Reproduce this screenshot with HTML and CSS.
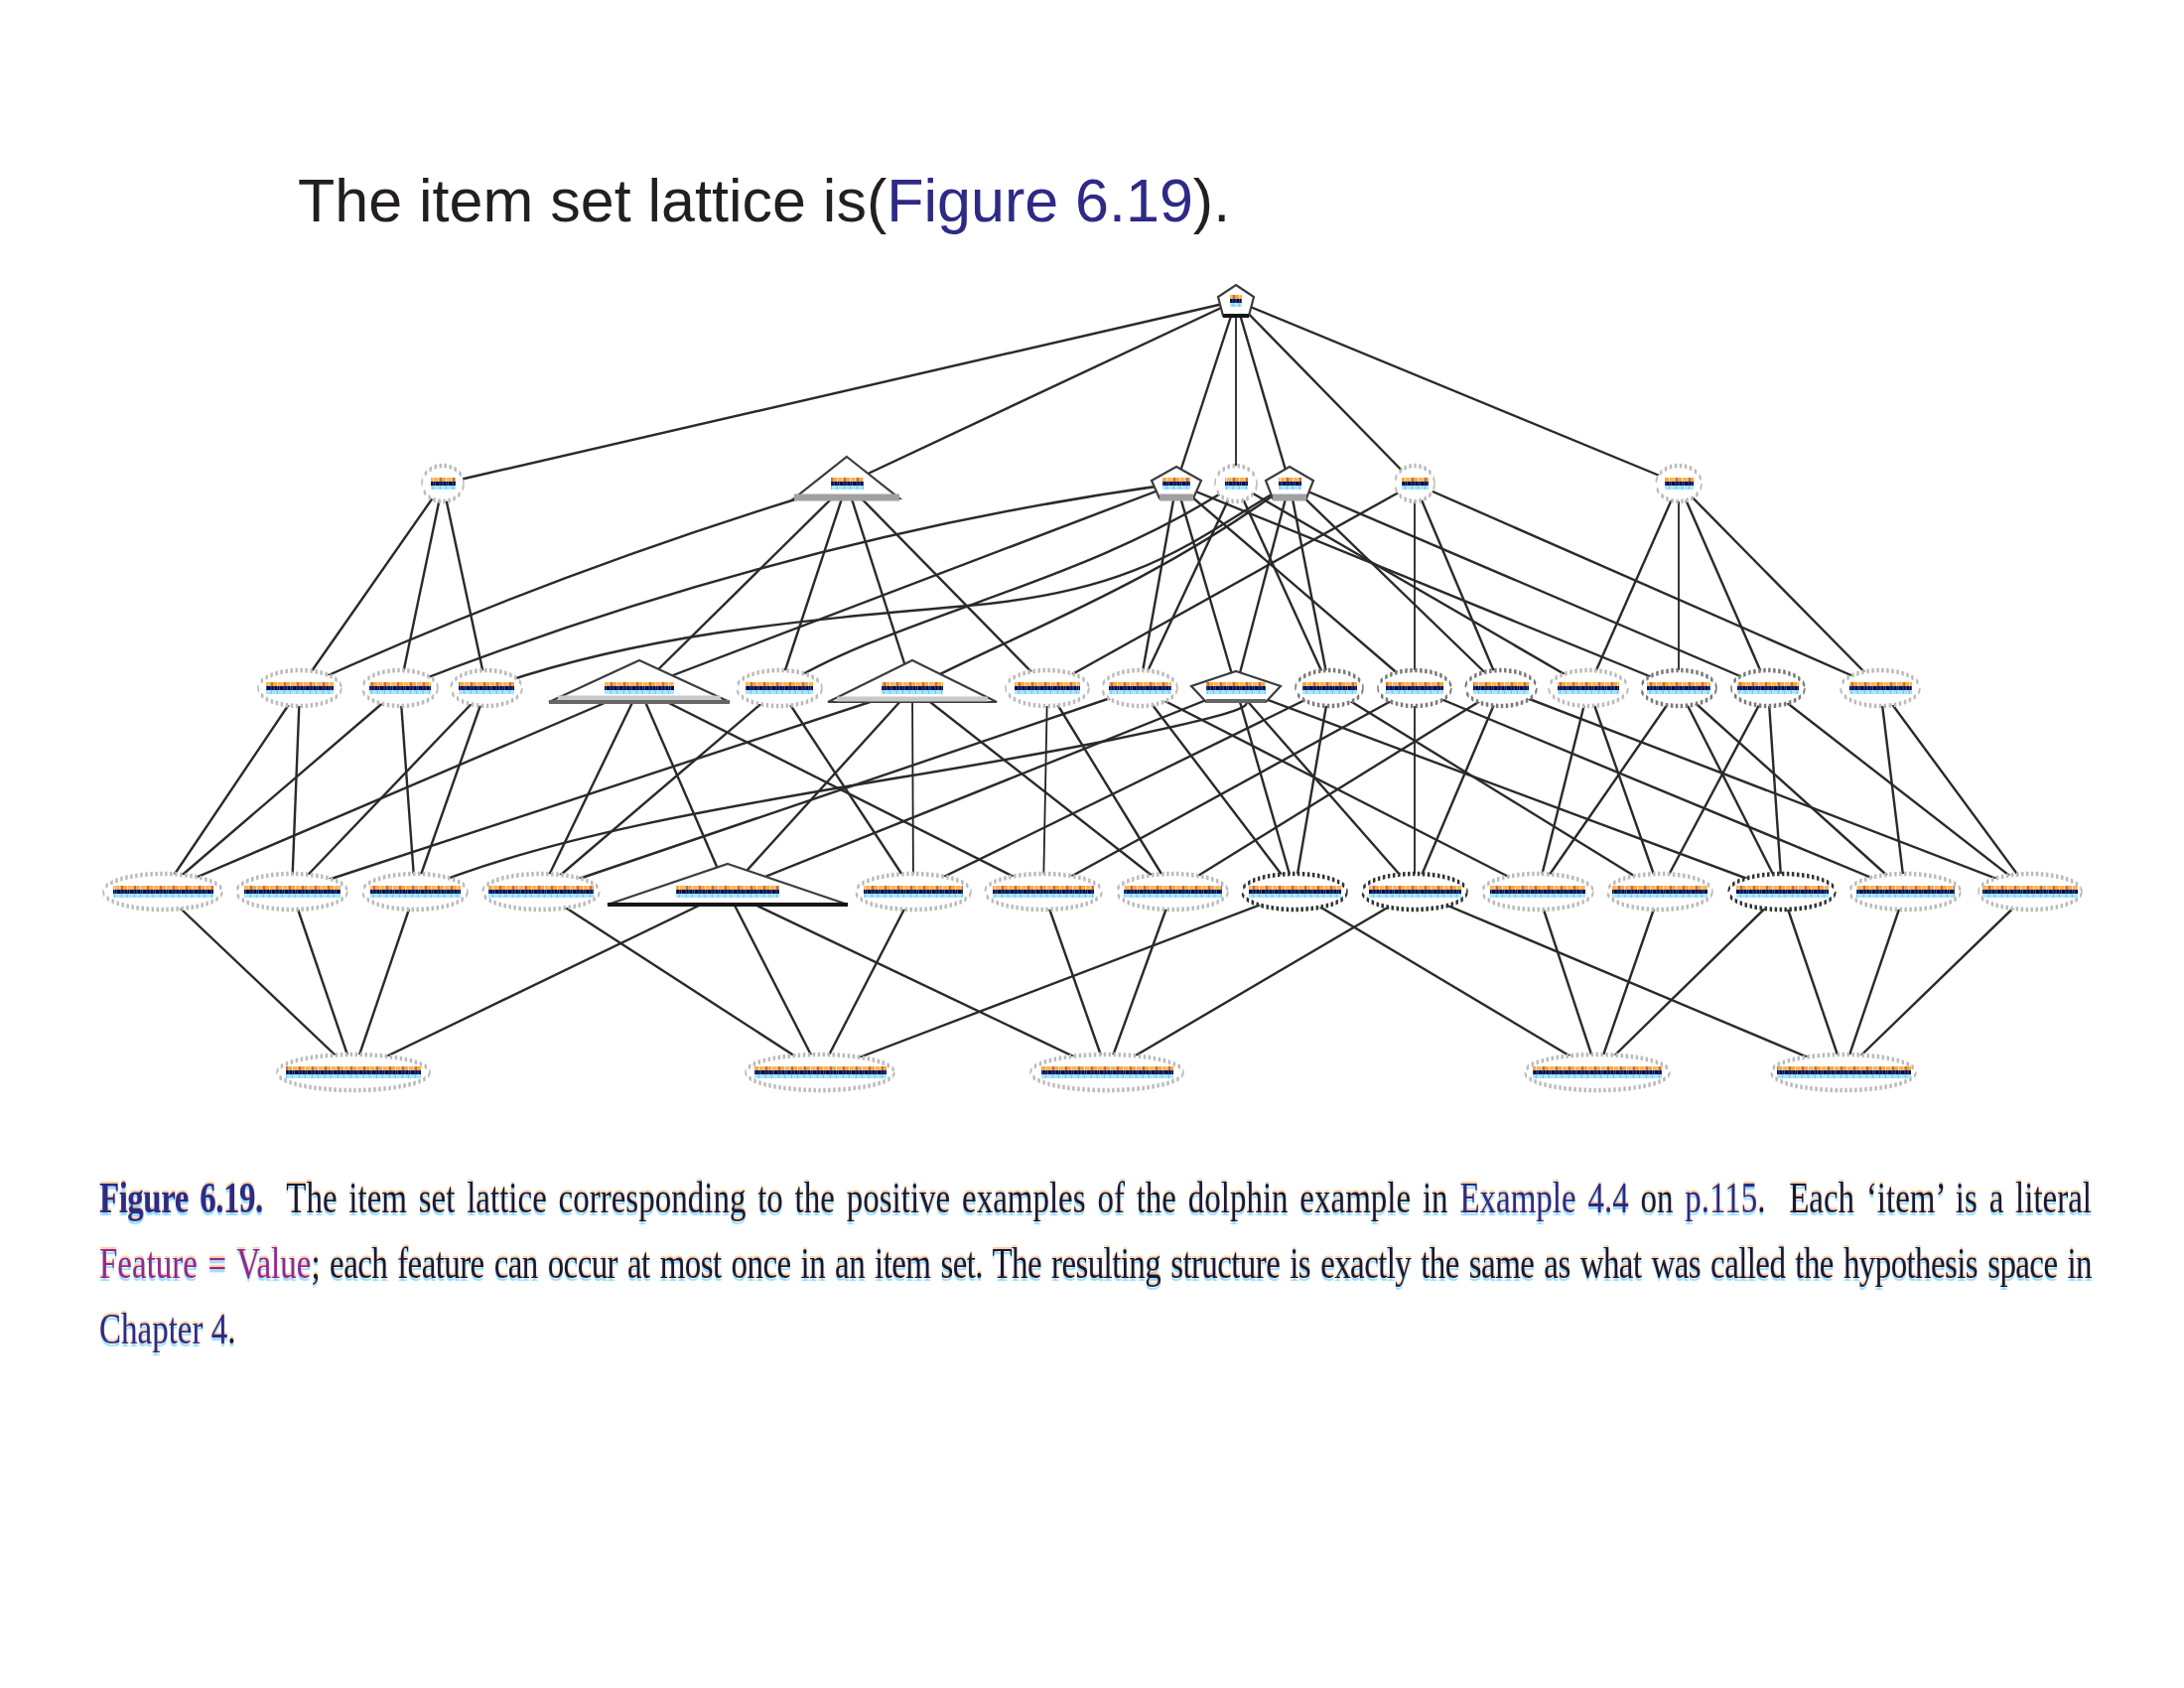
FILE: index.html
```html
<!DOCTYPE html>
<html lang="en">
<head>
<meta charset="utf-8">
<title>Item set lattice</title>
<link rel="stylesheet" href="styles.css">
</head>
<body>
<main class="slide">
<h1 class="title">The item set lattice is(<span class="ref">Figure 6.19</span>).</h1>
<svg class="lattice" width="2200" height="850" viewBox="0 270 2200 850" aria-label="Item set lattice">
<defs>
<pattern id="bar" patternUnits="userSpaceOnUse" x="0" y="-6" width="13" height="12">
<rect x="0" y="0" width="13" height="12" fill="#fff"/>
<rect x="0" y="0" width="13" height="4" fill="#fde3bf"/>
<rect x="0" y="0" width="3" height="4" fill="#f9a83c"/>
<rect x="4" y="0" width="4.5" height="4" fill="#fbb453"/>
<rect x="9.5" y="0" width="3" height="4" fill="#c9702a"/>
<rect x="0" y="4" width="13" height="4" fill="#3f86cc"/>
<rect x="0.4" y="4" width="2.6" height="4" fill="#0c0848"/>
<rect x="3.5" y="4" width="1.8" height="4" fill="#0c0848"/>
<rect x="5.9" y="4" width="3.8" height="4" fill="#0c0848"/>
<rect x="10.3" y="4" width="2.4" height="4" fill="#0c0848"/>
<rect x="0" y="8" width="13" height="4" fill="#a9e6fb"/>
<rect x="2.8" y="8" width="1" height="4" fill="#6cc0ee"/>
<rect x="9.8" y="8" width="1" height="4" fill="#6cc0ee"/>
</pattern>
</defs>
<g class="edges">
<!-- root -->
<path d="M1245 303L446 487"/><path d="M1245 303L853 487"/><path d="M1245 303L1185 487"/><path class="v" d="M1245 303L1245 487"/><path d="M1245 303L1299 487"/><path d="M1245 303L1425 487"/><path d="M1245 303L1691 487"/>
<!-- level 1 to level 2 -->
<path d="M446 487L302 693"/><path d="M446 487L403 693"/><path d="M446 487L490 693"/>
<path d="M853 487Q560 575 302 693"/><path d="M853 487L644 693"/><path d="M853 487L785 693"/><path d="M853 487L919 693"/><path d="M853 487L1055 693"/>
<path d="M1185 487Q794 540 403 693"/><path d="M1185 487L644 693"/><path d="M1185 487L1148 693"/><path d="M1185 487L1245 693"/><path d="M1185 487L1425 693"/><path d="M1185 487L1691 693"/>
<path d="M1245 487C1090 590 900 620 785 693"/><path d="M1245 487L1148 693"/><path d="M1245 487L1339 693"/><path d="M1245 487L1600 693"/>
<path d="M490 693C640 640 800 625 975 610S1200 545 1299 487"/><path d="M1299 487C1160 590 1020 640 919 693"/><path d="M1299 487L1245 693"/><path d="M1299 487L1339 693"/><path d="M1299 487L1512 693"/><path d="M1299 487L1781 693"/>
<path d="M1425 487L1055 693"/><path class="v" d="M1425 487L1425 693"/><path d="M1425 487L1512 693"/><path d="M1425 487L1894 693"/>
<path d="M1691 487L1600 693"/><path class="v" d="M1691 487L1691 693"/><path d="M1691 487L1781 693"/><path d="M1691 487L1894 693"/>
<!-- level 2 to level 3 -->
<path d="M302 693L164 898"/><path d="M302 693L294 898"/>
<path d="M403 693L164 898"/><path d="M403 693L418 898"/>
<path d="M490 693L294 898"/><path d="M490 693L418 898"/>
<path d="M644 693L164 898"/><path d="M644 693L545 898"/><path d="M644 693L733 898"/><path d="M644 693L1051 898"/>
<path d="M785 693L545 898"/><path d="M785 693L920 898"/>
<path d="M919 693L294 898"/><path d="M919 693L733 898"/><path class="v" d="M919 693L920 898"/><path d="M919 693L1181 898"/>
<path class="v" d="M1055 693L1051 898"/><path d="M1055 693L1181 898"/>
<path d="M1148 693Q860 790 545 898"/><path d="M1148 693L1304 898"/><path d="M1148 693L1549 898"/>
<path d="M418 898C600 820 900 790 1120 745S1220 710 1245 693"/><path d="M1245 693L733 898"/><path d="M1245 693L1304 898"/><path d="M1245 693L1425 898"/><path d="M1245 693L1795 898"/>
<path d="M1339 693L920 898"/><path d="M1339 693L1304 898"/><path d="M1339 693L1672 898"/>
<path d="M1425 693L1051 898"/><path class="v" d="M1425 693L1425 898"/><path d="M1425 693L1919 898"/>
<path d="M1512 693L1181 898"/><path d="M1512 693L1425 898"/><path d="M1512 693L2045 898"/>
<path d="M1600 693L1549 898"/><path d="M1600 693L1672 898"/>
<path d="M1691 693L1549 898"/><path d="M1691 693L1795 898"/><path d="M1691 693L1919 898"/>
<path d="M1781 693L1672 898"/><path d="M1781 693L1795 898"/><path d="M1781 693L2045 898"/>
<path d="M1894 693L1919 898"/><path d="M1894 693L2045 898"/>
<!-- level 3 to level 4 -->
<path d="M164 898L356 1080"/><path d="M294 898L356 1080"/><path d="M418 898L356 1080"/><path d="M733 898L356 1080"/>
<path d="M545 898L826 1080"/><path d="M733 898L826 1080"/><path d="M920 898L826 1080"/><path d="M1304 898L826 1080"/>
<path d="M733 898L1115 1080"/><path d="M1051 898L1115 1080"/><path d="M1181 898L1115 1080"/><path d="M1425 898L1115 1080"/>
<path d="M1304 898L1609 1080"/><path d="M1549 898L1609 1080"/><path d="M1672 898L1609 1080"/><path d="M1795 898L1609 1080"/>
<path d="M1425 898L1857 1080"/><path d="M1795 898L1857 1080"/><path d="M1919 898L1857 1080"/><path d="M2045 898L1857 1080"/>
</g>
<!-- root node -->
<g transform="translate(1245 303)"><polygon class="pent" points="0,-16 18,-4 13,15 -13,15 -18,-4"/><path class="base-black" d="M-13 15H13"/><rect x="-6" y="-6" width="12" height="12" fill="url(#bar)"/></g>
<!-- level 1 -->
<g transform="translate(446 487)"><ellipse class="ring" rx="21" ry="6"/><rect x="-12" y="-6" width="25" height="12" fill="url(#bar)"/></g>
<g transform="translate(853 487)"><polygon class="tri" points="0,-27 53,15 -53,15"/><path class="base-mid" d="M-53 14H53"/><rect x="-16" y="-6" width="33" height="12" fill="url(#bar)"/></g>
<g transform="translate(1185 487)"><polygon class="pent" points="0,-17 25,-3 17,15 -17,15 -25,-3"/><path class="base-mid" d="M-17 14H17"/><rect x="-14" y="-6" width="28" height="12" fill="url(#bar)"/></g>
<g transform="translate(1245 487)"><ellipse class="ring" rx="21" ry="6"/><rect x="-11" y="-6" width="23" height="12" fill="url(#bar)"/></g>
<g transform="translate(1299 487)"><polygon class="pent" points="0,-17 24,-3 17,15 -17,15 -24,-3"/><path class="base-mid" d="M-17 14H17"/><rect x="-11" y="-6" width="23" height="12" fill="url(#bar)"/></g>
<g transform="translate(1425 487)"><ellipse class="ring" rx="20" ry="6"/><rect x="-13" y="-6" width="27" height="12" fill="url(#bar)"/></g>
<g transform="translate(1691 487)"><ellipse class="ring" rx="23" ry="6"/><rect x="-14" y="-6" width="29" height="12" fill="url(#bar)"/></g>
<!-- level 2 -->
<g transform="translate(302 693)"><ellipse class="ring" rx="42" ry="6"/><rect x="-34" y="-6" width="68" height="12" fill="url(#bar)"/></g>
<g transform="translate(403 693)"><ellipse class="ring" rx="38" ry="6"/><rect x="-31" y="-6" width="62" height="12" fill="url(#bar)"/></g>
<g transform="translate(490 693)"><ellipse class="ring" rx="36" ry="6"/><rect x="-28" y="-6" width="56" height="12" fill="url(#bar)"/></g>
<g transform="translate(644 693)"><polygon class="tri" points="0,-28 91,14 -91,14"/><path class="base-light" d="M-82 10H82"/><path class="base-dark" d="M-91 14H91"/><rect x="-35" y="-6" width="70" height="12" fill="url(#bar)"/></g>
<g transform="translate(785 693)"><ellipse class="ring" rx="43" ry="6"/><rect x="-34" y="-6" width="68" height="12" fill="url(#bar)"/></g>
<g transform="translate(919 693)"><polygon class="tri" points="0,-28 85,14 -85,14"/><path class="base-light" d="M-76 11H76"/><rect x="-31" y="-6" width="62" height="12" fill="url(#bar)"/></g>
<g transform="translate(1055 693)"><ellipse class="ring" rx="42" ry="6"/><rect x="-33" y="-6" width="66" height="12" fill="url(#bar)"/></g>
<g transform="translate(1148 693)"><ellipse class="ring" rx="38" ry="6"/><rect x="-31" y="-6" width="63" height="12" fill="url(#bar)"/></g>
<g transform="translate(1245 693)"><polygon class="pent" points="0,-17 45,-2 30,14 -30,14 -45,-2"/><path class="base-dark" d="M-30 13H30"/><rect x="-30" y="-6" width="60" height="12" fill="url(#bar)"/></g>
<g transform="translate(1339 693)"><ellipse class="ring dark" rx="34" ry="6"/><rect x="-27" y="-6" width="55" height="12" fill="url(#bar)"/></g>
<g transform="translate(1425 693)"><ellipse class="ring dark" rx="37" ry="6"/><rect x="-29" y="-6" width="58" height="12" fill="url(#bar)"/></g>
<g transform="translate(1512 693)"><ellipse class="ring dark" rx="36" ry="6"/><rect x="-28" y="-6" width="56" height="12" fill="url(#bar)"/></g>
<g transform="translate(1600 693)"><ellipse class="ring" rx="40" ry="6"/><rect x="-31" y="-6" width="62" height="12" fill="url(#bar)"/></g>
<g transform="translate(1691 693)"><ellipse class="ring dark" rx="38" ry="6"/><rect x="-32" y="-6" width="64" height="12" fill="url(#bar)"/></g>
<g transform="translate(1781 693)"><ellipse class="ring dark" rx="37" ry="6"/><rect x="-31" y="-6" width="62" height="12" fill="url(#bar)"/></g>
<g transform="translate(1894 693)"><ellipse class="ring" rx="40" ry="6"/><rect x="-31" y="-6" width="63" height="12" fill="url(#bar)"/></g>
<!-- level 3 -->
<g transform="translate(164 898)"><ellipse class="ring" rx="60" ry="6"/><rect x="-50" y="-6" width="101" height="12" fill="url(#bar)"/></g>
<g transform="translate(294 898)"><ellipse class="ring" rx="56" ry="6"/><rect x="-48" y="-6" width="97" height="12" fill="url(#bar)"/></g>
<g transform="translate(418 898)"><ellipse class="ring" rx="53" ry="6"/><rect x="-45" y="-6" width="91" height="12" fill="url(#bar)"/></g>
<g transform="translate(545 898)"><ellipse class="ring" rx="59" ry="6"/><rect x="-53" y="-6" width="106" height="12" fill="url(#bar)"/></g>
<g transform="translate(733 898)"><polygon class="tri" points="0,-28 121,13 -121,13"/><path class="base-black" d="M-121 13H121"/><rect x="-52" y="-6" width="104" height="12" fill="url(#bar)"/></g>
<g transform="translate(920 898)"><ellipse class="ring" rx="58" ry="6"/><rect x="-50" y="-6" width="100" height="12" fill="url(#bar)"/></g>
<g transform="translate(1051 898)"><ellipse class="ring" rx="59" ry="6"/><rect x="-51" y="-6" width="102" height="12" fill="url(#bar)"/></g>
<g transform="translate(1181 898)"><ellipse class="ring" rx="56" ry="6"/><rect x="-49" y="-6" width="99" height="12" fill="url(#bar)"/></g>
<g transform="translate(1304 898)"><ellipse class="ring black" rx="53" ry="6"/><rect x="-46" y="-6" width="93" height="12" fill="url(#bar)"/></g>
<g transform="translate(1425 898)"><ellipse class="ring black" rx="53" ry="6"/><rect x="-46" y="-6" width="93" height="12" fill="url(#bar)"/></g>
<g transform="translate(1549 898)"><ellipse class="ring" rx="56" ry="6"/><rect x="-48" y="-6" width="96" height="12" fill="url(#bar)"/></g>
<g transform="translate(1672 898)"><ellipse class="ring" rx="53" ry="6"/><rect x="-48" y="-6" width="96" height="12" fill="url(#bar)"/></g>
<g transform="translate(1795 898)"><ellipse class="ring black" rx="54" ry="6"/><rect x="-46" y="-6" width="93" height="12" fill="url(#bar)"/></g>
<g transform="translate(1919 898)"><ellipse class="ring" rx="56" ry="6"/><rect x="-49" y="-6" width="99" height="12" fill="url(#bar)"/></g>
<g transform="translate(2045 898)"><ellipse class="ring" rx="52" ry="6"/><rect x="-48" y="-6" width="96" height="12" fill="url(#bar)"/></g>
<!-- level 4 -->
<g transform="translate(356 1080)"><ellipse class="ring" rx="77" ry="6"/><rect x="-68" y="-6" width="136" height="12" fill="url(#bar)"/></g>
<g transform="translate(826 1080)"><ellipse class="ring" rx="75" ry="6"/><rect x="-66" y="-6" width="133" height="12" fill="url(#bar)"/></g>
<g transform="translate(1115 1080)"><ellipse class="ring" rx="77" ry="6"/><rect x="-66" y="-6" width="133" height="12" fill="url(#bar)"/></g>
<g transform="translate(1609 1080)"><ellipse class="ring" rx="73" ry="6"/><rect x="-65" y="-6" width="130" height="12" fill="url(#bar)"/></g>
<g transform="translate(1857 1080)"><ellipse class="ring" rx="73" ry="6"/><rect x="-67" y="-6" width="135" height="12" fill="url(#bar)"/></g>
</svg>
<div class="caption">
<p class="line"><b class="blue fig">Figure 6.19.</b> &nbsp;The item set lattice corresponding to the positive examples of the dolphin example in <span class="blue">Example 4.4</span> on <span class="blue">p.115</span>. &nbsp;Each ‘item’ is a literal</p>
<p class="line tight"><span class="purple">Feature = Value</span>; each feature can occur at most once in an item set. The resulting structure is exactly the same as what was called the hypothesis space in</p>
<p class="line last"><span class="blue">Chapter 4</span>.</p>
</div>
</main>
</body>
</html>
```

FILE: styles.css
```css
html, body {
  margin: 0;
  padding: 0;
  background: #fff;
}
.slide {
  width: 2200px;
  height: 1700px;
  display: flex;
  flex-direction: column;
}
.title {
  margin: 167px 0 33px 300px;
  font: 400 61px/70px "Liberation Sans", Arial, sans-serif;
  color: #231f20;
}
.ref { color: #2e2a86; }
.lattice {
  display: block;
  filter: blur(0.6px);
}
.edges path {
  fill: none;
  stroke: #2a2a2a;
  stroke-width: 2.4;
}
.edges .v {
  stroke: #222;
  stroke-width: 1.8;
}
.ring {
  fill: #fff;
  stroke: #bbb;
  stroke-width: 1.5;
  stroke-dasharray: 2.5 2.5;
  transform: scale(1, 3);
}
.ring.dark { stroke: #7a7a7a; }
.ring.black { stroke: #333; }
.tri, .pent {
  fill: #fff;
  stroke: #3c3c3c;
  stroke-width: 2.2;
}
.base-mid { stroke: #a0a0a0; stroke-width: 7; }
.base-light { stroke: #c8c8c8; stroke-width: 5; }
.base-dark { stroke: #666; stroke-width: 4; }
.base-black { stroke: #161616; stroke-width: 4; }
.caption {
  margin: 57px 0 0 100px;
  width: 2007px;
  display: flex;
  flex-direction: column;
  font-family: "Liberation Serif", "Times New Roman", serif;
  font-size: 33px;
  line-height: 66px;
  color: #1b1733;
}
.line {
  margin: 0;
  height: 66px;
  white-space: nowrap;
  text-align: justify;
  text-align-last: justify;
  transform: scaleY(1.35);
  transform-origin: 0 43px;
  text-shadow: 0 -2px 1px rgba(250, 165, 80, 0.6), 0 2px 1px rgba(110, 205, 250, 0.75);
}
.fig { letter-spacing: -0.5px; }
.tight { letter-spacing: -0.6px; }
.tight .purple { letter-spacing: 0; }
.last { text-align-last: left; }
.blue { color: #2e2a86; }
.purple { color: #92278f; }
```
